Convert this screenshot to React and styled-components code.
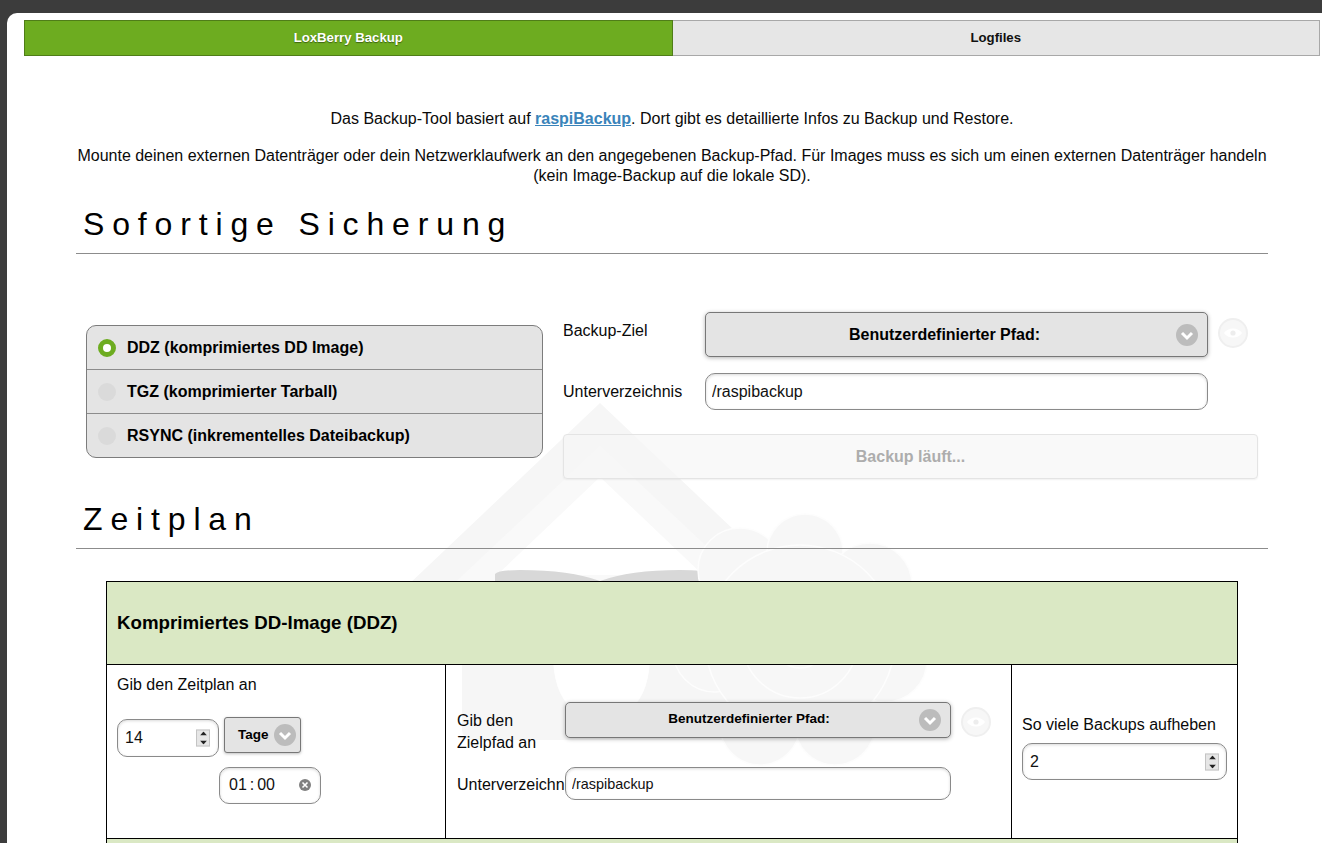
import styled, { createGlobalStyle } from "styled-components";

const GlobalStyle = createGlobalStyle`
  html, body {
    margin: 0;
    height: 843px;
    overflow: hidden;
    background: #3c3c3c;
    font-family: "Liberation Sans", Arial, sans-serif;
    color: #0a0a0a;
  }
`;

const Page = styled.div`
  position: relative;
  box-sizing: border-box;
  height: 830px;
  margin: 13px 0 0 7px;
  padding: 7px 2px 0 17px;
  background: #fff;
  border-top-left-radius: 10px;
  overflow: hidden;
`;

const Watermark = styled.svg`
  position: absolute;
  left: 386px;
  top: 377px;
  width: 560px;
  height: 400px;
`;

const Tabs = styled.nav`
  position: relative;
  display: flex;
  height: 36px;
`;

const Tab = styled.div`
  flex: 1;
  display: flex;
  align-items: center;
  justify-content: center;
  box-sizing: border-box;
  padding-bottom: 2px;
  font-size: 13.2px;
  font-weight: bold;
  border: 1px solid ${(p) => (p.$active ? "#4f7d18" : "#a8a8a8")};
  border-left-width: ${(p) => (p.$active ? "1px" : "0")};
  background: ${(p) => (p.$active ? "#6dac20" : "#e6e6e6")};
  color: ${(p) => (p.$active ? "#fff" : "#111")};
  text-shadow: ${(p) => (p.$active ? "0 1px 1px #3d6410" : "none")};
`;

const Content = styled.main`
  position: relative;
  width: 1192px;
  margin: 53px 0 0 52px;
`;

const Intro = styled.p`
  margin: 0 0 17px;
  font-size: 16px;
  line-height: 20px;
  text-align: center;
`;

const SourceLink = styled.a`
  font-weight: bold;
  color: #3a84ba;
  text-decoration: underline;
`;

const Heading = styled.h2`
  margin: ${(p) => p.$top}px 0 0;
  padding: 0 0 9px 7px;
  font-size: 32px;
  font-weight: normal;
  line-height: 40px;
  letter-spacing: 7.85px;
  color: #000;
  border-bottom: 1px solid #8c8c8c;
`;

const BackupRow = styled.section`
  display: grid;
  grid-template-columns: 457px 1fr;
  column-gap: 20px;
  margin: 58px 0 0 10px;
`;

const RadioList = styled.div`
  align-self: start;
  margin-top: 13px;
  border: 1px solid #7c7c7c;
  border-radius: 10px;
  background: #e4e4e4;
  overflow: hidden;
`;

const RadioRow = styled.div`
  display: flex;
  align-items: center;
  gap: 11px;
  box-sizing: border-box;
  height: 44px;
  padding: 0 11px;
  font-size: 16px;
  font-weight: bold;
  color: #000;
  &:first-child {
    height: 43px;
  }
  & + & {
    border-top: 1px solid #8c8c8c;
  }
`;

const RadioDot = styled.span`
  flex: none;
  box-sizing: border-box;
  width: 18px;
  height: 18px;
  border-radius: 50%;
  background: ${(p) => (p.$checked ? "#fff" : "#dadada")};
  border: ${(p) => (p.$checked ? "5px solid #6dac20" : "none")};
`;

const TargetForm = styled.div`
  display: grid;
  grid-template-columns: 142px 503px 50px;
  grid-auto-rows: min-content;
  row-gap: 16px;
  align-items: center;
`;

const Label = styled.label`
  font-size: 16px;
  line-height: 20px;
  margin-top: ${(p) => p.$shift || 0}px;
`;

const Select = styled.div`
  position: relative;
  display: flex;
  align-items: center;
  justify-content: center;
  box-sizing: border-box;
  height: ${(p) => p.$height}px;
  padding-right: ${(p) => (p.$small ? 18 : 24)}px;
  padding-bottom: ${(p) => (p.$small ? 3 : 0)}px;
  background: #e4e4e4;
  border: 1px solid #777;
  border-radius: 5px;
  box-shadow: 0 1px 4px rgba(0, 0, 0, 0.3);
  font-size: ${(p) => (p.$small ? 13.5 : 16)}px;
  font-weight: bold;
  color: #000;
`;

const ChevronDisc = styled.span`
  flex: none;
  display: flex;
  align-items: center;
  justify-content: center;
  width: 22px;
  height: 22px;
  border-radius: 50%;
  background: #bcbcbc;
  ${(p) => p.$overlay && `
    position: absolute;
    right: 9px;
    top: 50%;
    transform: translateY(-50%);
  `}
`;

const EyeButton = styled.span`
  display: flex;
  align-items: center;
  justify-content: center;
  box-sizing: border-box;
  width: 30px;
  height: 30px;
  margin-left: 10px;
  margin-top: ${(p) => p.$shift || 0}px;
  border-radius: 50%;
  border: 2px solid #efefef;
  background: #f7f7f7;
`;

const FieldWrap = styled.div`
  position: relative;
  box-sizing: border-box;
  width: ${(p) => p.$width}px;
  margin-left: ${(p) => p.$left || 0}px;
`;

const TextInput = styled.input`
  display: block;
  box-sizing: border-box;
  width: 100%;
  height: ${(p) => p.$height}px;
  padding: 0 7px 0 ${(p) => p.$padLeft || 6}px;
  font-family: inherit;
  font-size: ${(p) => p.$size || 16}px;
  color: #111;
  background: #fff;
  border: 1px solid #8a8a8a;
  border-radius: 10px;
  box-shadow: inset 0 1px 3px rgba(0, 0, 0, 0.15);
  outline: none;
`;

const TimeInput = styled(TextInput)`
  padding-bottom: 2px;
  word-spacing: -1.5px;
`;

const Spinner = styled.span`
  position: absolute;
  right: ${(p) => p.$right}px;
  top: 50%;
  transform: translateY(-50%);
  display: flex;
  flex-direction: column;
  justify-content: space-between;
  box-sizing: border-box;
  width: 14px;
  height: 17px;
  background: #e6e6e6;
  border: 1px solid #c4c4c4;
  svg {
    display: block;
    margin: 1px auto;
  }
`;

const ClearDot = styled.span`
  position: absolute;
  right: 10px;
  top: calc(50% - 1px);
  transform: translateY(-50%);
  display: flex;
  align-items: center;
  justify-content: center;
  width: 12px;
  height: 12px;
  border-radius: 50%;
  background: #808080;
`;

const RunButton = styled.button`
  grid-column: 1 / -1;
  box-sizing: border-box;
  width: 695px;
  height: 45px;
  margin-top: 8px;
  font-family: inherit;
  font-size: 16px;
  font-weight: bold;
  color: #adadad;
  background: rgba(246, 246, 246, 0.7);
  border: 1px solid #e4e4e4;
  border-radius: 4px;
  box-shadow: 0 1px 2px rgba(0, 0, 0, 0.06);
`;

const ScheduleTable = styled.table`
  table-layout: fixed;
  width: 1131px;
  margin: 32px 0 0 30px;
  border-collapse: collapse;
`;

const HeaderCell = styled.th`
  height: 82px;
  padding: 0 10px;
  text-align: left;
  font-size: 18.72px;
  font-weight: bold;
  color: #000;
  background: #dae8c4;
  border: 1px solid #000;
`;

const Cell = styled.td`
  box-sizing: border-box;
  height: 174px;
  padding: ${(p) => p.$top}px 10px 0 ${(p) => p.$left || 10}px;
  vertical-align: top;
  font-size: 16px;
  line-height: 20px;
  border: 1px solid #000;
`;

const CellLabel = styled.div`
  margin-bottom: ${(p) => p.$gap}px;
`;

const IntervalRow = styled.div`
  display: flex;
  align-items: flex-start;
  gap: 5px;
  margin-bottom: 10px;
`;

const UnitSelect = styled.div`
  display: flex;
  align-items: center;
  gap: 5px;
  box-sizing: border-box;
  width: 77px;
  height: 36px;
  margin-top: -2px;
  padding: 0 4px 0 13px;
  font-size: 13.5px;
  font-weight: bold;
  color: #000;
  background: #e4e4e4;
  border: 1px solid #777;
  border-radius: 3px;
  box-shadow: 0 1px 3px rgba(0, 0, 0, 0.25);
`;

const TargetGrid = styled.div`
  display: grid;
  grid-template-columns: 108px 386px 40px;
  row-gap: 29px;
  align-items: center;
`;

const ClippedLabel = styled.label`
  overflow: hidden;
  white-space: nowrap;
  line-height: 22px;
  margin-top: 3px;
`;

const WrappedLabel = styled.label`
  line-height: 22px;
  margin-top: 8px;
  margin-bottom: -16px;
`;

const NextHeader = styled.td`
  height: 40px;
  background: #dae8c4;
  border: 1px solid #000;
`;

function Chevron() {
  return (
    <svg width="16" height="16" viewBox="0 0 16 16" fill="none">
      <path d="M3 6 L8 11 L13 6" stroke="#fff" strokeWidth="3" />
    </svg>
  );
}

function Eye() {
  return (
    <svg width="20" height="14" viewBox="0 0 20 14">
      <path d="M1 7 C5 1 15 1 19 7 C15 13 5 13 1 7 Z" fill="#fff" />
      <circle cx="10" cy="7" r="2.6" fill="#ededed" />
    </svg>
  );
}

function Spin({ right }) {
  return (
    <Spinner $right={right}>
      <svg width="7" height="4" viewBox="0 0 7 4"><path d="M3.5 0 L7 4 L0 4 Z" fill="#222" /></svg>
      <svg width="7" height="4" viewBox="0 0 7 4"><path d="M0 0 L7 0 L3.5 4 Z" fill="#222" /></svg>
    </Spinner>
  );
}

function HouseMark() {
  // faded logo behind the page, coordinates are page pixels
  return (
    <Watermark viewBox="393 390 560 400" aria-hidden="true">
      <path d="M600 403 L850 640 L350 640 Z" fill="#f6f6f6" />
      <path d="M600 446 L790 625 L410 625 Z" fill="#f9f9f9" />
      <path d="M600 477 L703 575 L497 575 Z" fill="#fff" />
      <rect x="462" y="625" width="290" height="115" rx="10" fill="#f6f6f6" />
      <path d="M553 660 H650 Q648 700 625 713 H578 Q555 700 553 660 Z" fill="#fff" />
      <path d="M495 574 Q498 570 520 570 Q570 570 600 581 Q630 570 680 570 Q705 570 708 574 V600 H495 Z" fill="#d8d8d8" />
      <g fill="#f7f7f7" stroke="#fdfdfd" strokeWidth="1.5">
        <circle cx="740" cy="570" r="42" />
        <circle cx="805" cy="552" r="38" />
        <circle cx="870" cy="585" r="42" />
        <circle cx="885" cy="660" r="42" />
        <circle cx="835" cy="725" r="40" />
        <circle cx="760" cy="725" r="40" />
        <circle cx="715" cy="650" r="42" />
        <circle cx="800" cy="640" r="95" />
        <circle cx="800" cy="640" r="58" />
        <circle cx="800" cy="640" r="28" />
      </g>
    </Watermark>
  );
}

export default function App() {
  return (
    <>
      <GlobalStyle />
      <Page>
        <HouseMark />
        <Tabs>
          <Tab $active>LoxBerry Backup</Tab>
          <Tab>Logfiles</Tab>
        </Tabs>
        <Content>
          <Intro>
            Das Backup-Tool basiert auf <SourceLink href="#">raspiBackup</SourceLink>. Dort gibt es detaillierte Infos zu Backup und Restore.
          </Intro>
          <Intro>
            Mounte deinen externen Datenträger oder dein Netzwerklaufwerk an den angegebenen Backup-Pfad. Für Images muss es sich um einen externen Datenträger handeln (kein Image-Backup auf die lokale SD).
          </Intro>

          <Heading $top={18}>Sofortige Sicherung</Heading>
          <BackupRow>
            <RadioList>
              <RadioRow><RadioDot $checked />DDZ (komprimiertes DD Image)</RadioRow>
              <RadioRow><RadioDot />TGZ (komprimierter Tarball)</RadioRow>
              <RadioRow><RadioDot />RSYNC (inkrementelles Dateibackup)</RadioRow>
            </RadioList>
            <TargetForm>
              <Label $shift={-7}>Backup-Ziel</Label>
              <Select $height={45}>
                Benutzerdefinierter Pfad:
                <ChevronDisc $overlay><Chevron /></ChevronDisc>
              </Select>
              <EyeButton $shift={-4}><Eye /></EyeButton>
              <Label>Unterverzeichnis</Label>
              <FieldWrap $width={503}>
                <TextInput $height={37} readOnly value="/raspibackup" />
              </FieldWrap>
              <span />
              <RunButton disabled>Backup läuft...</RunButton>
            </TargetForm>
          </BackupRow>

          <Heading $top={20}>Zeitplan</Heading>
          <ScheduleTable>
            <colgroup>
              <col width="339" />
              <col width="566" />
              <col width="226" />
            </colgroup>
            <tbody>
              <tr>
                <HeaderCell colSpan={3}>Komprimiertes DD-Image (DDZ)</HeaderCell>
              </tr>
              <tr>
                <Cell $top={10}>
                  <CellLabel $gap={24}>Gib den Zeitplan an</CellLabel>
                  <IntervalRow>
                    <FieldWrap $width={102}>
                      <TextInput $height={38} $padLeft={7} readOnly value="14" />
                      <Spin right={9} />
                    </FieldWrap>
                    <UnitSelect>
                      Tage
                      <ChevronDisc><Chevron /></ChevronDisc>
                    </UnitSelect>
                  </IntervalRow>
                  <FieldWrap $width={102} $left={102}>
                    <TimeInput $height={37} $padLeft={9} readOnly value="01 : 00" />
                    <ClearDot>
                      <svg width="8" height="8" viewBox="0 0 8 8"><path d="M1.5 1.5 L6.5 6.5 M6.5 1.5 L1.5 6.5" stroke="#fff" strokeWidth="1.6" /></svg>
                    </ClearDot>
                  </FieldWrap>
                </Cell>
                <Cell $top={37} $left={11}>
                  <TargetGrid>
                    <WrappedLabel>Gib den Zielpfad an</WrappedLabel>
                    <Select $height={36} $small>
                      Benutzerdefinierter Pfad:
                      <ChevronDisc $overlay><Chevron /></ChevronDisc>
                    </Select>
                    <EyeButton $shift={3}><Eye /></EyeButton>
                    <ClippedLabel>Unterverzeichnis</ClippedLabel>
                    <FieldWrap $width={386}>
                      <TextInput $height={33} $size={14.4} $padLeft={6} readOnly value="/raspibackup" />
                    </FieldWrap>
                    <span />
                  </TargetGrid>
                </Cell>
                <Cell $top={50}>
                  <CellLabel $gap={8}>So viele Backups aufheben</CellLabel>
                  <FieldWrap $width={205}>
                    <TextInput $height={37} $padLeft={7} readOnly value="2" />
                    <Spin right={8} />
                  </FieldWrap>
                </Cell>
              </tr>
              <tr>
                <NextHeader colSpan={3} />
              </tr>
            </tbody>
          </ScheduleTable>
        </Content>
      </Page>
    </>
  );
}
